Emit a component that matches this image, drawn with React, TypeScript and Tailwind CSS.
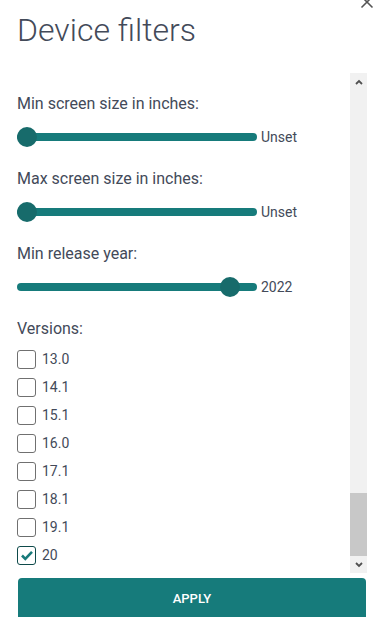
import React from "react";

const versions = [
	{ label: "13.0", checked: false },
	{ label: "14.1", checked: false },
	{ label: "15.1", checked: false },
	{ label: "16.0", checked: false },
	{ label: "17.1", checked: false },
	{ label: "18.1", checked: false },
	{ label: "19.1", checked: false },
	{ label: "20", checked: true },
];

function Slider({ thumb, value }: { thumb: "start" | "end"; value: string }) {
	return (
		<div className="flex items-center h-[20px] mt-[11px] mb-[20px]">
			<div className="relative w-[240px] h-[20px] flex items-center">
				<div className="w-full h-[8px] rounded-full bg-[#167b7b]" />
				<div
					className={
						thumb === "start"
							? "absolute left-0 top-0 w-[20px] h-[20px] rounded-full bg-[#176b6b]"
							: "absolute left-[203px] top-0 w-[20px] h-[20px] rounded-full bg-[#176b6b]"
					}
				/>
			</div>
			<span className="ml-[4px] text-[14px] leading-5 text-[#434a59]">{value}</span>
		</div>
	);
}

function Checkbox({ label, checked }: { label: string; checked: boolean }) {
	return (
		<div className="flex items-center h-[20px]">
			{checked ? (
				<div className="w-[19px] h-[19px] rounded-[3px] border-[1.5px] border-[#0e4a4a] flex items-center justify-center">
					<svg width="14" height="14" viewBox="0 0 14 14">
						<path d="M2 7.5 L5.3 10.8 L12 3.8" fill="none" stroke="#187a7a" strokeWidth="2.6" />
					</svg>
				</div>
			) : (
				<div className="w-[19px] h-[19px] rounded-[3px] border border-[#707070]" />
			)}
			<span className="ml-[6px] text-[14px] leading-5 text-[#434a59]">{label}</span>
		</div>
	);
}

export default function App() {
	return (
		<div
			className="relative w-[384px] h-[617px] overflow-hidden bg-white px-[17px] flex flex-col"
			style={{ fontFamily: "Roboto, 'Liberation Sans', sans-serif" }}
		>
			{/* Close */}
			<svg className="absolute left-[360px] top-[-5px]" width="14" height="14" viewBox="0 0 14 14">
				<path d="M1.5 1.5 L12.5 12.5 M12.5 1.5 L1.5 12.5" stroke="#555" strokeWidth="1.6" />
			</svg>

			{/* Title */}
			<h1 className="pt-[11px] text-[32px] leading-[38px] font-light text-[#434a59]">Device filters</h1>

			{/* Scroll area */}
			<div className="mt-[24px] h-[500px] shrink-0 flex">
				<div className="flex-1 overflow-hidden pt-[19px]">
					<p className="text-[16px] leading-6 text-[#434a59]">Min screen size in inches:</p>
					<Slider thumb="start" value="Unset" />
					<p className="text-[16px] leading-6 text-[#434a59]">Max screen size in inches:</p>
					<Slider thumb="start" value="Unset" />
					<p className="text-[16px] leading-6 text-[#434a59]">Min release year:</p>
					<Slider thumb="end" value="2022" />
					<p className="text-[16px] leading-6 text-[#434a59]">Versions:</p>
					<div className="mt-[8px] flex flex-col gap-[8px]">
						{versions.map((v) => (
							<Checkbox key={v.label} label={v.label} checked={v.checked} />
						))}
					</div>
				</div>
				{/* Scrollbar */}
				<div className="w-[17px] h-full bg-[#f1f1f1] flex flex-col">
					<div className="h-[17px] flex items-center justify-center">
						<svg width="8" height="6" viewBox="0 0 8 6">
							<path d="M1 5 L4 2 L7 5" fill="none" stroke="#505050" strokeWidth="1.8" />
						</svg>
					</div>
					<div className="flex-1 flex flex-col justify-end">
						<div className="h-[63px] bg-[#c8c8c8]" />
					</div>
					<div className="h-[17px] flex items-center justify-center">
						<svg width="8" height="6" viewBox="0 0 8 6">
							<path d="M1 1 L4 4 L7 1" fill="none" stroke="#505050" strokeWidth="1.8" />
						</svg>
					</div>
				</div>
			</div>

			{/* Apply */}
			<button className="mt-[5px] mx-[1px] h-[41px] shrink-0 rounded-t-[4px] bg-[#167b7b] text-white text-[13px] font-medium flex items-center justify-center">
				APPLY
			</button>
		</div>
	);
}
